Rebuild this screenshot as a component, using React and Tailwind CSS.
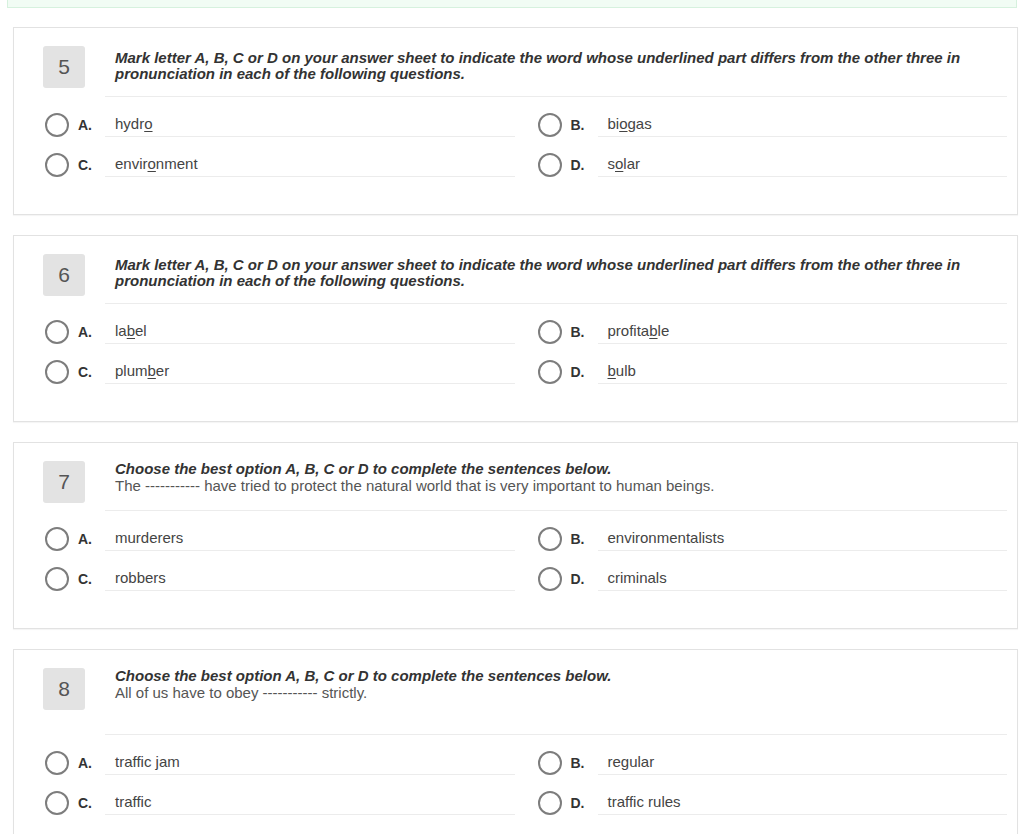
import React from "react";

// Quiz question data
const questions = [
  {
    id: 5,
    title:
      "Mark letter A, B, C or D on your answer sheet to indicate the word whose underlined part differs from the other three in pronunciation in each of the following questions.",
    body: null,
    pt: "pt-[4px]",
    h: "h-[51px]",
    options: [
      ["A.", ["hydr", "o", ""]],
      ["B.", ["bi", "o", "gas"]],
      ["C.", ["envir", "o", "nment"]],
      ["D.", ["s", "o", "lar"]],
    ],
  },
  {
    id: 6,
    title:
      "Mark letter A, B, C or D on your answer sheet to indicate the word whose underlined part differs from the other three in pronunciation in each of the following questions.",
    body: null,
    pt: "pt-[3px]",
    h: "h-[50px]",
    options: [
      ["A.", ["la", "b", "el"]],
      ["B.", ["profita", "b", "le"]],
      ["C.", ["plum", "b", "er"]],
      ["D.", ["", "b", "ulb"]],
    ],
  },
  {
    id: 7,
    title: "Choose the best option A, B, C or D to complete the sentences below.",
    body: "The ----------- have tried to protect the natural world that is very important to human beings.",
    pt: "pt-0",
    h: "h-[50px]",
    options: [
      ["A.", ["murderers"]],
      ["B.", ["environmentalists"]],
      ["C.", ["robbers"]],
      ["D.", ["criminals"]],
    ],
  },
  {
    id: 8,
    title: "Choose the best option A, B, C or D to complete the sentences below.",
    body: "All of us have to obey ----------- strictly.",
    pt: "pt-0",
    h: "h-[67px]",
    options: [
      ["A.", ["traffic jam"]],
      ["B.", ["regular"]],
      ["C.", ["traffic"]],
      ["D.", ["traffic rules"]],
    ],
  },
];

const Word = ({ parts }) =>
  parts.length === 1 ? (
    <span>{parts[0]}</span>
  ) : (
    <span>
      {parts[0]}
      <u className="underline underline-offset-2">{parts[1]}</u>
      {parts[2]}
    </span>
  );

const Option = ({ letter, parts }) => (
  <div className="flex items-start">
    <div className="ml-[2px] mt-[16px] w-6 h-6 rounded-full border-2 border-[#7d7d7d] bg-white shrink-0" />
    <div className="ml-[9px] w-[27px] pt-[18px] leading-5 text-[14px] font-bold text-[#333]">
      {letter}
    </div>
    <div className="flex-1 h-10 pt-[17px] pl-[10px] leading-5 text-[15px] text-[#444] border-b border-[#ececec]">
      <Word parts={parts} />
    </div>
  </div>
);

const QuestionCard = ({ q }) => (
  <div className="bg-white border border-[#e2e2e2] shadow-[0_1px_1px_rgba(0,0,0,0.04)] pt-[18px] pb-[37px] pl-[29px] pr-[10px]">
    <div className="flex items-start">
      <div className="w-[42px] h-[42px] rounded-[3px] bg-[#e3e3e3] flex items-center justify-center text-[21px] text-[#555] shrink-0">
        {q.id}
      </div>
      <div
        className={`ml-5 flex-1 pl-[10px] ${q.pt} ${q.h} border-b border-[#ececec] text-[15px] leading-4 text-[#333]`}
      >
        <div className="font-bold italic">{q.title}</div>
        {q.body && <div className="text-[#555] leading-[17px]">{q.body}</div>}
      </div>
    </div>
    <div className="grid grid-cols-2 gap-x-[21px]">
      {q.options.map(([letter, parts]) => (
        <Option key={letter} letter={letter} parts={parts} />
      ))}
    </div>
  </div>
);

export default function App() {
  return (
    <div
      className="min-h-screen bg-white overflow-hidden"
      style={{ fontFamily: '"Liberation Sans", Arial, sans-serif' }}
    >
      {/* tail of previous panel */}
      <div className="ml-[7px] mr-[7px] h-[8px] bg-[#f1fcf4] border-x border-b border-[#d6f1de]" />
      <div className="ml-[13px] mr-[6px] mt-[19px] flex flex-col gap-5">
        {questions.map((q) => (
          <QuestionCard key={q.id} q={q} />
        ))}
      </div>
    </div>
  );
}
